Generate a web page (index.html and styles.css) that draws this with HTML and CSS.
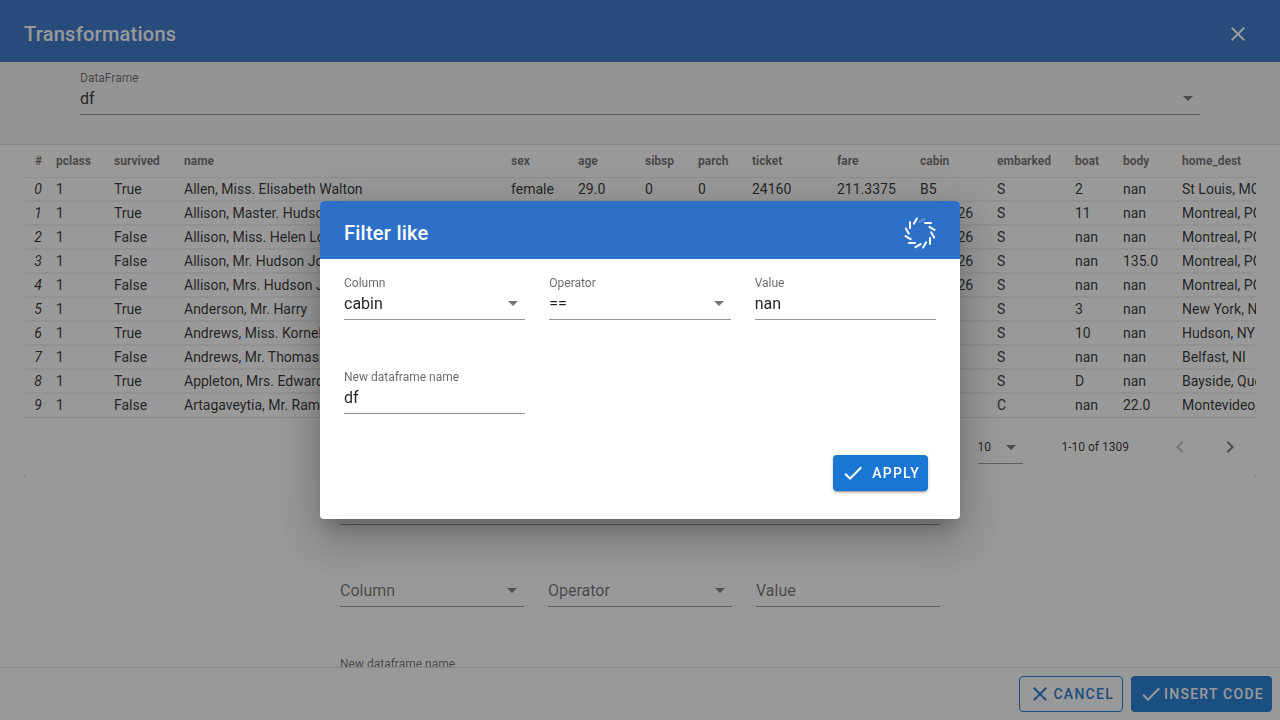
FILE: index.html
```html
<!DOCTYPE html>
<html lang="en">
<head>
<meta charset="utf-8">
<title>Transformations</title>
<meta name="viewport" content="width=device-width, initial-scale=1">
<link rel="stylesheet" href="styles.css">
</head>
<body>
<div class="app">
  <header class="app-header">
    <h1 class="title">Transformations</h1>
    <button class="icon-button" type="button" aria-label="Close"><svg class="icon" viewBox="0 0 24 24"><path d="M19,6.41L17.59,5L12,10.59L6.41,5L5,6.41L10.59,12L5,17.59L6.41,19L12,13.41L17.59,19L19,17.59L13.41,12L19,6.41Z"/></svg></button>
  </header>

  <section class="source-bar">
    <div class="field field-select">
      <label for="source">DataFrame</label>
      <select id="source"><option>df</option></select>
    </div>
  </section>

  <main class="content">
    <section class="table-card">
      <div class="table-scroll">
        <table>
          <colgroup><col class="w-index"><col class="w-pclass"><col class="w-survived"><col class="w-name"><col class="w-sex"><col class="w-age"><col class="w-sibsp"><col class="w-parch"><col class="w-ticket"><col class="w-fare"><col class="w-cabin"><col class="w-embarked"><col class="w-boat"><col class="w-body"><col class="w-home"></colgroup>
          <thead>
            <tr><th>#</th><th>pclass</th><th>survived</th><th>name</th><th>sex</th><th>age</th><th>sibsp</th><th>parch</th><th>ticket</th><th>fare</th><th>cabin</th><th>embarked</th><th>boat</th><th>body</th><th>home_dest</th></tr>
          </thead>
          <tbody>
            <tr><td>0</td><td>1</td><td>True</td><td>Allen, Miss. Elisabeth Walton</td><td>female</td><td>29.0</td><td>0</td><td>0</td><td>24160</td><td>211.3375</td><td>B5</td><td>S</td><td>2</td><td>nan</td><td>St Louis, MO</td></tr>
            <tr><td>1</td><td>1</td><td>True</td><td>Allison, Master. Hudson Trevor</td><td>male</td><td>0.9167</td><td>1</td><td>2</td><td>113781</td><td>151.55</td><td>C22 C26</td><td>S</td><td>11</td><td>nan</td><td>Montreal, PQ / Chesterville, ON</td></tr>
            <tr><td>2</td><td>1</td><td>False</td><td>Allison, Miss. Helen Loraine</td><td>female</td><td>2.0</td><td>1</td><td>2</td><td>113781</td><td>151.55</td><td>C22 C26</td><td>S</td><td>nan</td><td>nan</td><td>Montreal, PQ / Chesterville, ON</td></tr>
            <tr><td>3</td><td>1</td><td>False</td><td>Allison, Mr. Hudson Joshua Creighton</td><td>male</td><td>30.0</td><td>1</td><td>2</td><td>113781</td><td>151.55</td><td>C22 C26</td><td>S</td><td>nan</td><td>135.0</td><td>Montreal, PQ / Chesterville, ON</td></tr>
            <tr><td>4</td><td>1</td><td>False</td><td>Allison, Mrs. Hudson J C (Bessie Waldo Daniels)</td><td>female</td><td>25.0</td><td>1</td><td>2</td><td>113781</td><td>151.55</td><td>C22 C26</td><td>S</td><td>nan</td><td>nan</td><td>Montreal, PQ / Chesterville, ON</td></tr>
            <tr><td>5</td><td>1</td><td>True</td><td>Anderson, Mr. Harry</td><td>male</td><td>48.0</td><td>0</td><td>0</td><td>19952</td><td>26.55</td><td>E12</td><td>S</td><td>3</td><td>nan</td><td>New York, NY</td></tr>
            <tr><td>6</td><td>1</td><td>True</td><td>Andrews, Miss. Kornelia Theodosia</td><td>female</td><td>63.0</td><td>1</td><td>0</td><td>13502</td><td>77.9583</td><td>D7</td><td>S</td><td>10</td><td>nan</td><td>Hudson, NY</td></tr>
            <tr><td>7</td><td>1</td><td>False</td><td>Andrews, Mr. Thomas Jr</td><td>male</td><td>39.0</td><td>0</td><td>0</td><td>112050</td><td>0.0</td><td>A36</td><td>S</td><td>nan</td><td>nan</td><td>Belfast, NI</td></tr>
            <tr><td>8</td><td>1</td><td>True</td><td>Appleton, Mrs. Edward Dale (Charlotte Lamson)</td><td>female</td><td>53.0</td><td>2</td><td>0</td><td>11769</td><td>51.4792</td><td>C101</td><td>S</td><td>D</td><td>nan</td><td>Bayside, Queens, NY</td></tr>
            <tr><td>9</td><td>1</td><td>False</td><td>Artagaveytia, Mr. Ramon</td><td>male</td><td>71.0</td><td>0</td><td>0</td><td>PC 17609</td><td>49.5042</td><td>nan</td><td>C</td><td>nan</td><td>22.0</td><td>Montevideo, Uruguay</td></tr>
          </tbody>
        </table>
      </div>
      <div class="pager">
        <div class="pager-size"><select aria-label="Rows per page"><option>10</option></select></div>
        <span class="pager-range">1-10 of 1309</span>
        <div class="pager-nav">
          <button class="icon-button" type="button" aria-label="Previous page" disabled><svg class="icon" viewBox="0 0 24 24"><path d="M15.41,16.58L10.83,12L15.41,7.41L14,6L8,12L14,18L15.41,16.58Z"/></svg></button>
          <button class="icon-button" type="button" aria-label="Next page"><svg class="icon" viewBox="0 0 24 24"><path d="M8.59,16.58L13.17,12L8.59,7.41L10,6L16,12L10,18L8.59,16.58Z"/></svg></button>
        </div>
      </div>
      <div class="card-corners"><span></span><span></span></div>
    </section>

    <section class="transform-form">
      <div class="field field-select">
        <label for="transform">Transformation</label>
        <select id="transform"><option>Filter like</option></select>
      </div>
      <div class="form-row form-row-plain">
        <div class="field field-select"><select aria-label="Column"><option>Column</option></select></div>
        <div class="field field-select"><select aria-label="Operator"><option>Operator</option></select></div>
        <div class="field"><input type="text" aria-label="Value" placeholder="Value"></div>
      </div>
      <div class="form-row">
        <div class="field">
          <label for="page-name">New dataframe name</label>
          <input id="page-name" type="text" value="df">
        </div>
      </div>
    </section>
  </main>

  <footer class="app-footer">
    <button class="button button-outlined" type="button"><svg class="icon" viewBox="0 0 24 24"><path d="M19,6.41L17.59,5L12,10.59L6.41,5L5,6.41L10.59,12L5,17.59L6.41,19L12,13.41L17.59,19L19,17.59L13.41,12L19,6.41Z"/></svg>CANCEL</button>
    <button class="button" type="button"><svg class="icon" viewBox="0 0 24 24"><path d="M21,7L9,19L3.5,13.5L4.91,12.09L9,16.17L19.59,5.59L21,7Z"/></svg>INSERT CODE</button>
  </footer>
</div>

<div class="overlay">
  <form class="dialog" role="dialog" aria-labelledby="dialog-title">
    <header class="dialog-header">
      <h2 class="title" id="dialog-title">Filter like</h2>
      <svg class="spinner" viewBox="-18 -18 36 36" role="img" aria-label="Loading">
        <path d="M5-10H11"/>
        <path d="M5-10H11" transform="rotate(30)"/>
        <path d="M5-10H11" transform="rotate(60)"/>
        <path d="M5-10H11" transform="rotate(90)"/>
        <path d="M5-10H11" transform="rotate(120)"/>
        <path d="M5-10H11" transform="rotate(150)"/>
        <path d="M5-10H11" transform="rotate(180)"/>
        <path d="M5-10H11" transform="rotate(210)"/>
        <path d="M5-10H11" transform="rotate(240)"/>
        <path d="M5-10H11" transform="rotate(270)"/>
        <path d="M5-10H11" transform="rotate(300)"/>
        <path d="M5-10H11" transform="rotate(330)" opacity="0.25"/>
      </svg>
    </header>
    <div class="dialog-body">
      <div class="form-row">
        <div class="field field-select">
          <label for="column">Column</label>
          <select id="column"><option>cabin</option></select>
        </div>
        <div class="field field-select">
          <label for="operator">Operator</label>
          <select id="operator"><option>==</option></select>
        </div>
        <div class="field">
          <label for="value">Value</label>
          <input id="value" type="text" value="nan">
        </div>
      </div>
      <div class="form-row">
        <div class="field">
          <label for="new-name">New dataframe name</label>
          <input id="new-name" type="text" value="df">
        </div>
      </div>
    </div>
    <div class="dialog-actions">
      <button class="button button-raised" type="button"><svg class="icon" viewBox="0 0 24 24"><path d="M21,7L9,19L3.5,13.5L4.91,12.09L9,16.17L19.59,5.59L21,7Z"/></svg>APPLY</button>
    </div>
  </form>
</div>
</body>
</html>
```
FILE: styles.css
```css
*, *::before, *::after { box-sizing: border-box; }

body {
  margin: 0;
  font-family: Roboto, "Liberation Sans", sans-serif;
  font-size: 16px;
  color: rgba(0, 0, 0, 0.87);
  background: #fff;
}

.app { display: flex; flex-direction: column; height: 100vh; }

.app-header {
  display: flex;
  flex: none;
  align-items: center;
  justify-content: space-between;
  padding: 18px 24px 12px;
  background: #2d70c7;
  color: #fff;
}

.title { margin: 0; font-size: 20px; line-height: 32px; font-weight: 500; letter-spacing: 0.0125em; }

.app-header .icon-button { padding: 0 6px; color: #fff; }

.icon { display: block; flex: none; width: 24px; height: 24px; fill: currentColor; }

.icon-button {
  padding: 0;
  border: 0;
  background: none;
  color: rgba(0, 0, 0, 0.54);
}
.icon-button:disabled { color: rgba(0, 0, 0, 0.26); }

.source-bar {
  flex: none;
  padding: 6px 80px 29px;
  background: #f5f5f5;
  border-bottom: 1px solid #e0e0e0;
}

/* Form fields */
.field { position: relative; display: flex; flex-direction: column; min-width: 0; }

.field label { font-size: 12px; line-height: 20px; color: rgba(0, 0, 0, 0.6); }

.field select,
.field input {
  display: block;
  width: 100%;
  height: 27px;
  margin: 0;
  padding: 0 0 6px;
  border: 0;
  border-bottom: 1px solid rgba(0, 0, 0, 0.42);
  border-radius: 0;
  background: none;
  color: inherit;
  font: inherit;
  line-height: 20px;
  appearance: none;
  outline: none;
}

.field select { padding: 0 0 5px; }

.field-select::after,
.pager-size::after {
  content: "";
  position: absolute;
  right: 7px;
  bottom: 14px;
  border: 5px solid transparent;
  border-top-color: rgba(0, 0, 0, 0.54);
  border-bottom: 0;
  pointer-events: none;
}

.form-row { display: grid; grid-template-columns: repeat(3, 1fr); gap: 24px; }

.form-row-plain { color: rgba(0, 0, 0, 0.6); }
.form-row-plain input::placeholder { color: rgba(0, 0, 0, 0.6); opacity: 1; }

/* Content */
.content { flex: 1; min-height: 0; overflow: hidden; }

.table-card { margin: 0 24px; }
.table-scroll { overflow: hidden; }

table {
  width: 1411px;
  table-layout: fixed;
  border-collapse: separate;
  border-spacing: 0;
  font-size: 14px;
}

.w-index { width: 25px; }
.w-pclass { width: 58px; }
.w-survived { width: 70px; }
.w-name { width: 327px; }
.w-sex, .w-age { width: 67px; }
.w-sibsp { width: 53px; }
.w-parch { width: 54px; }
.w-ticket { width: 85px; }
.w-fare { width: 83px; }
.w-cabin { width: 77px; }
.w-embarked { width: 78px; }
.w-boat { width: 48px; }
.w-body { width: 59px; }
.w-home { width: 260px; }

th, td { padding: 0 7px; text-align: left; white-space: nowrap; }

th {
  height: 33px;
  border-bottom: 1px solid #ebebeb;
  font-size: 12px;
  font-weight: 700;
  color: rgba(0, 0, 0, 0.6);
}

td { height: 24px; border-bottom: 2px solid #f0f0f0; }

th:first-child, td:first-child { text-align: right; }
td:first-child { font-style: italic; }

tbody tr:last-child td { padding-bottom: 1px; border-bottom: 1px solid #e0e0e0; }

.pager {
  display: flex;
  align-items: center;
  justify-content: flex-end;
  height: 57px;
  padding-right: 14px;
  font-size: 12px;
}

.pager-size { position: relative; width: 45px; margin-right: 39px; }

.pager-size select {
  display: block;
  width: 100%;
  height: 34px;
  padding: 1px 0 0;
  border: 0;
  border-bottom: 1px solid rgba(0, 0, 0, 0.42);
  border-radius: 0;
  background: none;
  color: inherit;
  font: inherit;
  appearance: none;
}

.pager-nav { display: flex; gap: 26px; margin-left: 39px; }

.card-corners { display: flex; justify-content: space-between; }
.card-corners span { width: 2px; height: 1px; background: #d0d0d0; }

.transform-form { width: 600px; margin: 2px auto 0; }
.transform-form .form-row-plain { margin: 55px 0 47px; }

.app-footer {
  display: flex;
  flex: none;
  justify-content: flex-end;
  gap: 8px;
  padding: 8px;
  border-top: 1px solid #e0e0e0;
}

/* Buttons */
.button {
  display: flex;
  align-items: center;
  gap: 1px;
  height: 36px;
  padding: 0 8px;
  border: 0;
  border-radius: 4px;
  background: #1976d2;
  color: #fff;
  font: 500 14px/20px Roboto, "Liberation Sans", sans-serif;
  letter-spacing: 0.09em;
}

.button-outlined { border: 1px solid #1976d2; background: none; color: #1976d2; }

.button-raised {
  gap: 7px;
  box-shadow: 0 3px 1px -2px rgba(0, 0, 0, 0.2), 0 2px 2px rgba(0, 0, 0, 0.14), 0 1px 5px rgba(0, 0, 0, 0.12);
}

/* Dialog */
.overlay {
  position: fixed;
  inset: 0;
  display: flex;
  align-items: center;
  justify-content: center;
  background: rgba(33, 33, 33, 0.46);
}

.dialog {
  width: 50%;
  min-width: 480px;
  overflow: hidden;
  border-radius: 4px;
  background: #fff;
  box-shadow: 0 11px 15px -7px rgba(0, 0, 0, 0.2), 0 24px 38px 3px rgba(0, 0, 0, 0.14), 0 9px 46px 8px rgba(0, 0, 0, 0.12);
}

.dialog-header {
  display: flex;
  align-items: center;
  justify-content: space-between;
  height: 58px;
  padding: 6px 22px 0 24px;
  background: #2d70c7;
  color: #fff;
}

.spinner { width: 36px; height: 36px; fill: none; stroke: #fff; stroke-width: 2; stroke-linecap: round; }

.dialog-body { display: grid; gap: 47px; padding: 14px 24px 0; }

.dialog-actions { display: flex; justify-content: flex-end; padding: 41px 32px 28px; }
```
